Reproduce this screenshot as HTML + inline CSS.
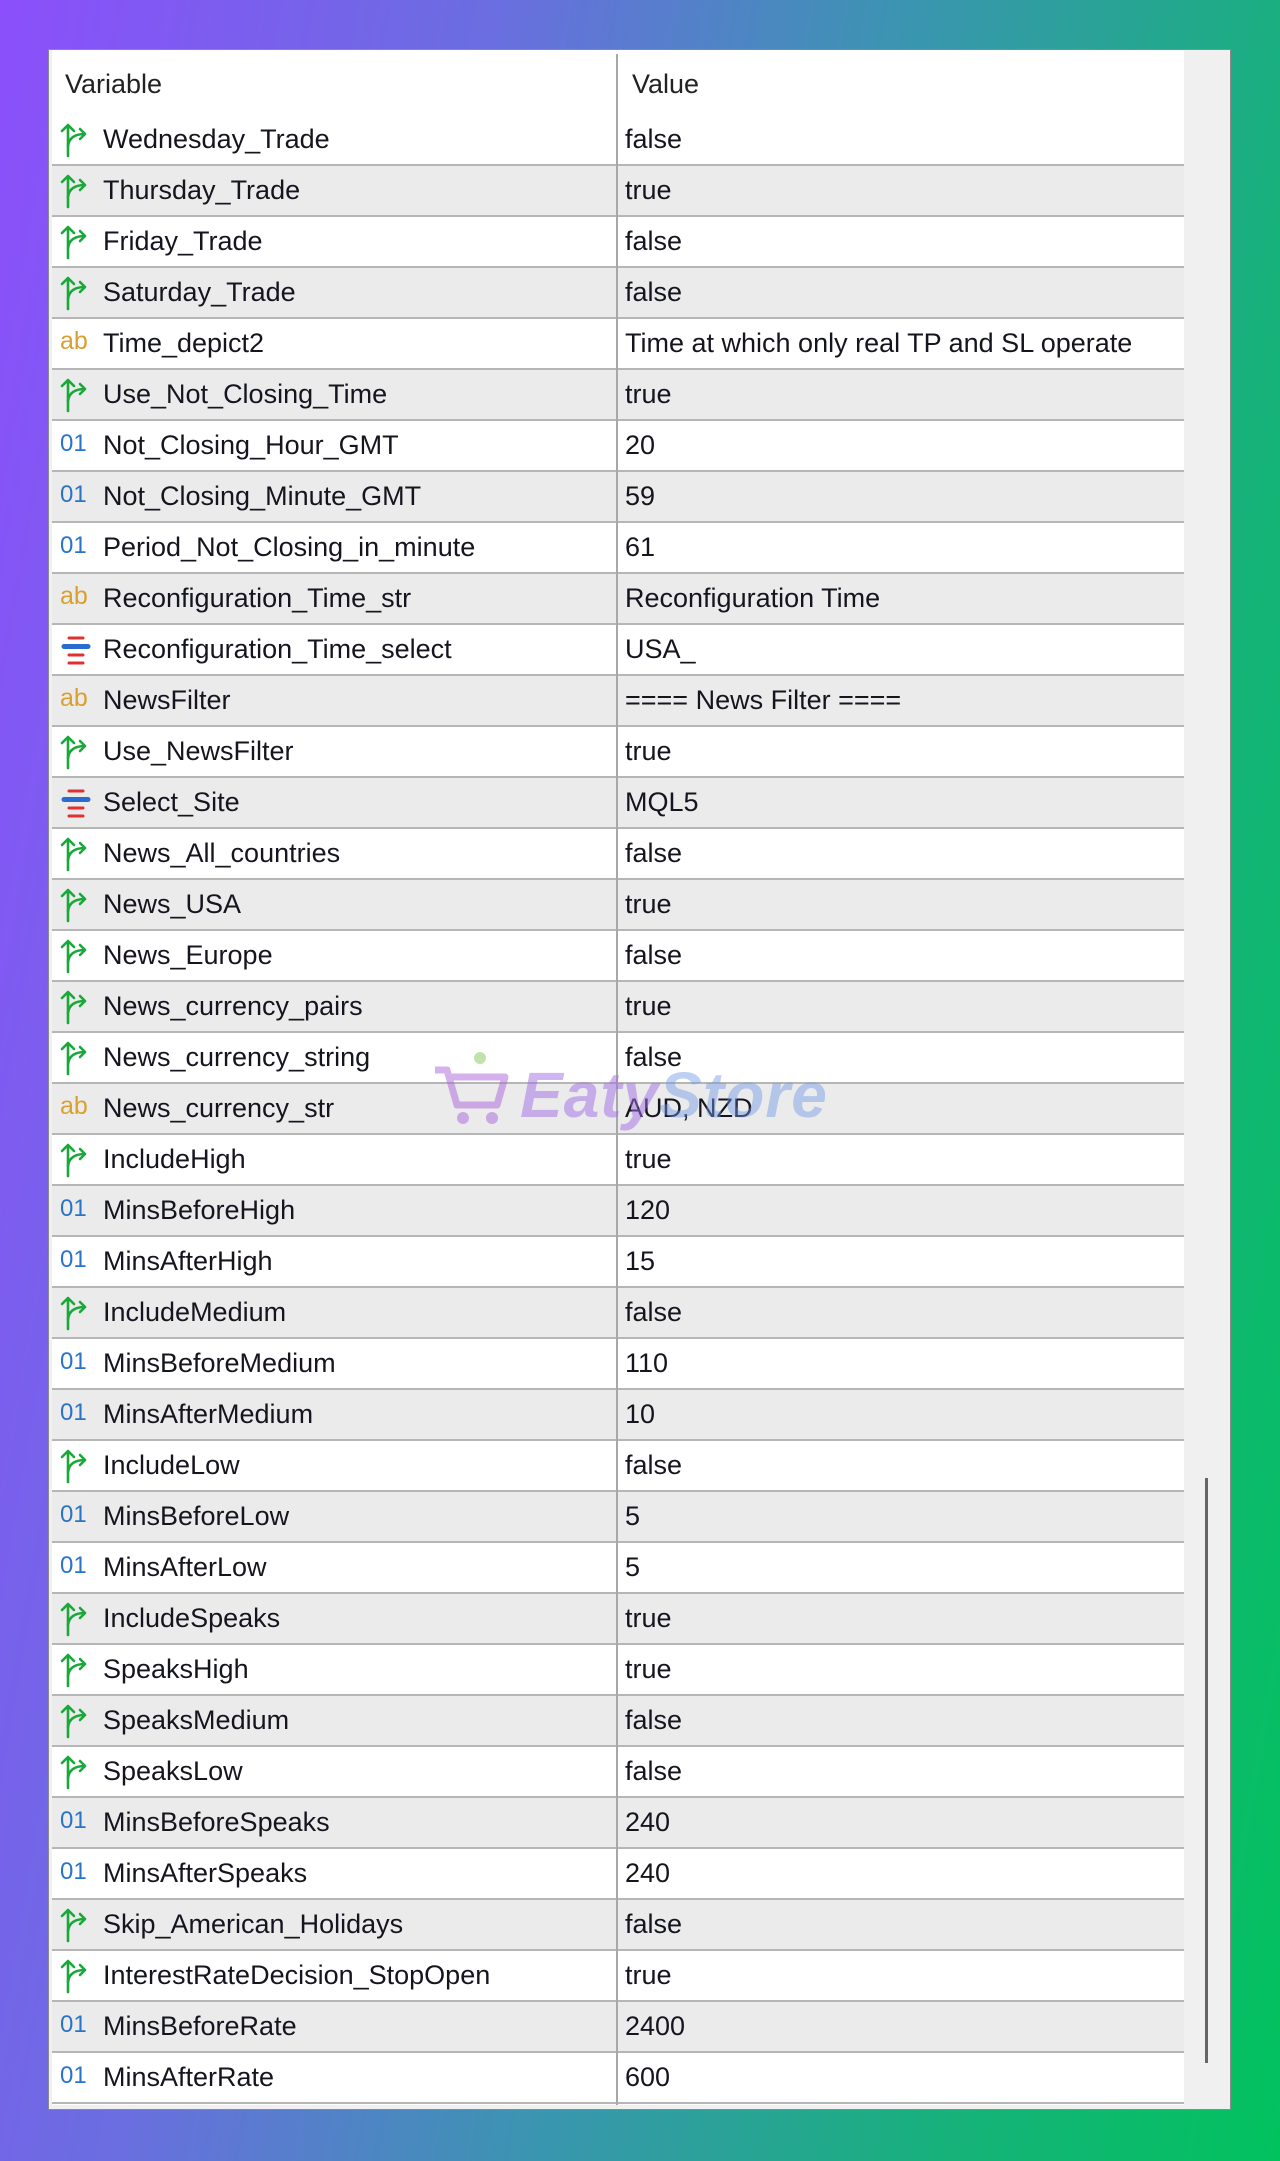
<!DOCTYPE html>
<html><head><meta charset="utf-8">
<style>
html,body{margin:0;padding:0}
body{width:1280px;height:2161px;position:relative;overflow:hidden;
background:linear-gradient(100deg,#8b4ffb 0%,#6a6ee0 30%,#3a95b0 55%,#16b27a 80%,#02c25e 100%);
font-family:"Liberation Sans",sans-serif;}
.panel{position:absolute;left:48px;top:49px;width:1183px;height:2061px;background:#f0f0f0;border:1px solid #8a8a8a;box-sizing:border-box}
.tbl{position:absolute;left:52px;top:50px;width:1132px;height:2055px;background:#fff}
.hdr{position:absolute;top:3px;height:62px;font-size:27px;color:#222;line-height:62px}
.vdiv{position:absolute;left:564px;top:4px;width:2px;height:2051px;background:#a8a8a8}
.row{position:absolute;left:0;width:1132px;height:51px;box-sizing:border-box;border-bottom:2px solid #b6b6b6;font-size:27px;color:#15151f;line-height:49px}
.g{background:#ebebeb}
.row .n{position:absolute;left:51px;top:0;white-space:nowrap}
.row .v{position:absolute;left:573px;top:0;white-space:nowrap}
.row svg{position:absolute;left:6px;top:7px}
.ic{position:absolute;left:8px;top:-2px;font-size:25px}
.sb{position:absolute;left:1205px;top:1478px;width:3px;height:585px;background:#666}
.wm{position:absolute;left:520px;top:1058px;font-size:64px;font-weight:bold;font-style:italic;color:rgba(160,110,230,0.5);letter-spacing:1px}
.wm span{color:rgba(110,150,230,0.45)}
.cart{position:absolute;left:430px;top:1040px}
</style></head><body>
<div class="panel"></div>
<div class="tbl">
<div class="hdr" style="left:13px">Variable</div>
<div class="hdr" style="left:580px">Value</div>
<div id="rows"></div>
<div class="vdiv"></div>
</div>
<div class="sb"></div>
<svg class="cart" width="90" height="90" viewBox="0 0 90 90"><g fill="none" stroke="rgba(170,100,220,0.5)" stroke-width="7" stroke-linejoin="round"><path d="M5 30h12l10 35h40l8-28H22"/></g><circle cx="33" cy="78" r="6" fill="rgba(170,100,220,0.5)"/><circle cx="62" cy="78" r="6" fill="rgba(170,100,220,0.5)"/><circle cx="50" cy="18" r="6" fill="rgba(130,200,90,0.5)"/></svg>
<div class="wm">Eaty<span>Store</span></div>
<script>
var R=[
["b","Wednesday_Trade","false"],["b","Thursday_Trade","true"],["b","Friday_Trade","false"],["b","Saturday_Trade","false"],
["s","Time_depict2","Time at which only real TP and SL operate"],["b","Use_Not_Closing_Time","true"],
["n","Not_Closing_Hour_GMT","20"],["n","Not_Closing_Minute_GMT","59"],["n","Period_Not_Closing_in_minute","61"],
["s","Reconfiguration_Time_str","Reconfiguration Time"],["e","Reconfiguration_Time_select","USA_"],
["s","NewsFilter","==== News Filter ===="],["b","Use_NewsFilter","true"],["e","Select_Site","MQL5"],
["b","News_All_countries","false"],["b","News_USA","true"],["b","News_Europe","false"],["b","News_currency_pairs","true"],
["b","News_currency_string","false"],["s","News_currency_str","AUD, NZD"],["b","IncludeHigh","true"],
["n","MinsBeforeHigh","120"],["n","MinsAfterHigh","15"],["b","IncludeMedium","false"],["n","MinsBeforeMedium","110"],
["n","MinsAfterMedium","10"],["b","IncludeLow","false"],["n","MinsBeforeLow","5"],["n","MinsAfterLow","5"],
["b","IncludeSpeaks","true"],["b","SpeaksHigh","true"],["b","SpeaksMedium","false"],["b","SpeaksLow","false"],
["n","MinsBeforeSpeaks","240"],["n","MinsAfterSpeaks","240"],["b","Skip_American_Holidays","false"],
["b","InterestRateDecision_StopOpen","true"],["n","MinsBeforeRate","2400"],["n","MinsAfterRate","600"]];
var ic={
b:'<svg width="36" height="36" viewBox="0 0 36 36"><g fill="none" stroke="#1aa83a" stroke-width="2.6" stroke-linecap="round" stroke-linejoin="round"><path d="M10 34V3M4 9l6-6 6 6"/><path d="M10 24c1-8 7-12 17-12M22 7l5 5-5 5"/></g></svg>',
e:'<svg width="36" height="36" viewBox="0 0 36 36"><g stroke-width="3" stroke-linecap="round"><path d="M11 6h14M11 23h14M11 31h14" stroke="#e03030"/><path d="M6 14.5h24" stroke="#2a6bd0" stroke-width="5"/></g></svg>'};
var h="";
for(var i=0;i<R.length;i++){var r=R[i],t=65+i*51;
var icon=r[0]=="s"?'<span class="ic" style="color:#d9a030">ab</span>':r[0]=="n"?'<span class="ic" style="color:#2a74c8;font-size:24px">01</span>':ic[r[0]];
h+='<div class="row'+(i%2?' g':'')+'" style="top:'+t+'px">'+icon+'<span class="n">'+r[1]+'</span><span class="v">'+r[2]+'</span></div>';}
document.getElementById("rows").innerHTML=h;
</script>
</body></html>
